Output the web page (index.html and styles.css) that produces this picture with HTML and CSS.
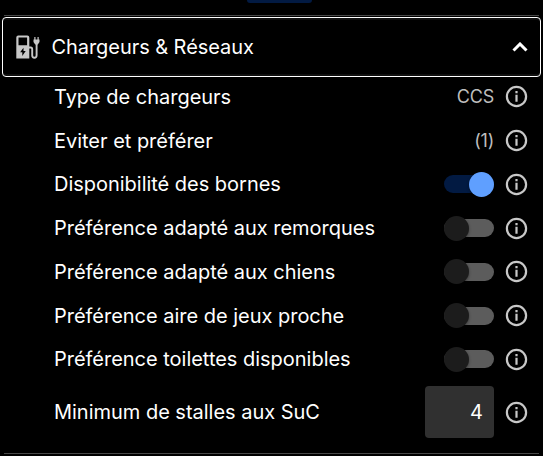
FILE: index.html
```
<!DOCTYPE html>
<html lang="fr">
<head>
  <meta charset="UTF-8">
  <title>Chargeurs &amp; Réseaux</title>
  <link rel="stylesheet" href="styles.css">
</head>
<body>
  <svg class="defs" width="0" height="0">
    <symbol id="info" viewBox="0 0 25 25">
      <circle cx="12.500" cy="12.500" r="9.600"/>
      <path d="M12.500 7v2.300M12.500 10.800v7"/>
    </symbol>
  </svg>

  <div class="previous"><div class="chip"></div></div>

  <section class="panel">
    <button class="panel-header">
      <svg class="station" viewBox="0 0 24 24">
        <path class="fill" fill-rule="evenodd" d="M.8 23.500V2.500A2 2 0 0 1 2.800.5h9a2 2 0 0 1 2 2v21zM3 2.500v7.700h8.600V2.500zM8 12.800l-3.400 4.500h2.200v3.600l3.400-4.800H8z"/>
        <path class="line" d="M13.500 12.500h1.700q1.500 0 1.500 1.700v6q0 2.500 2.200 2.500t2.200-2.500V8"/>
        <path class="fill" d="M18.800 2H20v2.500h2V2h1.200v2.500h.8V7l-1.700 2.500h-2.600L18 7V4.500h.8z"/>
      </svg>
      <span class="title">Chargeurs &amp; Réseaux</span>
      <svg class="chevron" viewBox="0 0 16 10"><path d="M1.500 8.500L8 2l6.500 6.500"/></svg>
    </button>

    <div class="rows">
      <div class="row">
        <span class="label">Type de chargeurs</span>
        <span class="value">CCS</span>
        <svg class="info"><use href="#info"/></svg>
      </div>
      <div class="row">
        <span class="label">Eviter et préférer</span>
        <span class="value">(1)</span>
        <svg class="info"><use href="#info"/></svg>
      </div>
      <div class="row">
        <span class="label">Disponibilité des bornes</span>
        <span class="switch on"></span>
        <svg class="info"><use href="#info"/></svg>
      </div>
      <div class="row">
        <span class="label">Préférence adapté aux remorques</span>
        <span class="switch"></span>
        <svg class="info"><use href="#info"/></svg>
      </div>
      <div class="row">
        <span class="label">Préférence adapté aux chiens</span>
        <span class="switch"></span>
        <svg class="info"><use href="#info"/></svg>
      </div>
      <div class="row">
        <span class="label">Préférence aire de jeux proche</span>
        <span class="switch"></span>
        <svg class="info"><use href="#info"/></svg>
      </div>
      <div class="row">
        <span class="label">Préférence toilettes disponibles</span>
        <span class="switch"></span>
        <svg class="info"><use href="#info"/></svg>
      </div>
      <div class="row row-input">
        <span class="label">Minimum de stalles aux SuC</span>
        <input class="number" type="text" value="4">
        <svg class="info"><use href="#info"/></svg>
      </div>
    </div>
  </section>
</body>
</html>
```

FILE: styles.css
```
* {
  box-sizing: border-box;
}

body {
  margin: 0;
  height: 456px;
  overflow: hidden;
  background-color: #000;
  color: #fff;
  font-family: Inter, sans-serif;
  font-size: 20px;
  letter-spacing: -0.02px;
}

.defs {
  display: block;
}

.previous {
  height: 16px;
  margin: 0 4px;
  padding-left: 243px;
  border-bottom: 1px solid #484848;
}

.chip {
  width: 65px;
  height: 3px;
  border-radius: 0 0 8px 8px;
  background-color: #021a42;
}

.panel {
  height: 437px;
  margin: 1px 4px 0;
  border-bottom: 1px solid #484848;
}

.panel-header {
  display: flex;
  align-items: center;
  width: 539px;
  height: 60px;
  margin: 0 -2px;
  padding: 0 12px;
  border: 1px solid #fff;
  border-radius: 4px;
  background-color: #000;
  box-shadow: inset 0 2px #101010, inset 0 -2px #101010;
  color: #fff;
  font: inherit;
  letter-spacing: -0.06px;
  text-align: left;
}

.station {
  width: 25px;
  height: 24px;
}

.station .fill {
  fill: #c8c8c8;
}

.station .line {
  fill: none;
  stroke: #c8c8c8;
  stroke-width: 1.9;
}

.title {
  flex: 1;
  margin-left: 11.5px;
}

.chevron {
  width: 16px;
  height: 10px;
}

.chevron path {
  fill: none;
  stroke: #fff;
  stroke-width: 3;
}

.rows {
  padding: 0 10px 0 50px;
  margin-top: -2px;
}

.row {
  display: flex;
  align-items: center;
  height: 43.75px;
}

.label {
  flex: 1;
}

.value {
  color: #bdbdbd;
  font-size: 18px;
  letter-spacing: -0.2px;
}

.info {
  width: 25px;
  height: 25px;
  margin-left: 10px;
  fill: none;
  stroke: #c8c8c8;
  stroke-width: 2.2;
}

.switch {
  position: relative;
  width: 50px;
  height: 18px;
  border-radius: 9px;
  background-color: #5c5c5c;
}

.switch::after {
  content: "";
  position: absolute;
  top: -3.5px;
  left: 0;
  width: 25px;
  height: 25px;
  border-radius: 50%;
  background-color: #1c1c1c;
  box-shadow: 0 1px 3px rgba(0, 0, 0, 0.4);
}

.switch.on {
  background-color: #021a42;
}

.switch.on::after {
  left: 25px;
  background-color: #5f9fff;
}

.row-input {
  height: 62px;
}

.number {
  width: 69px;
  height: 52px;
  padding: 0 11px;
  border: 0;
  border-radius: 4px;
  background-color: #303030;
  color: #fff;
  font: inherit;
  text-align: right;
}
```
